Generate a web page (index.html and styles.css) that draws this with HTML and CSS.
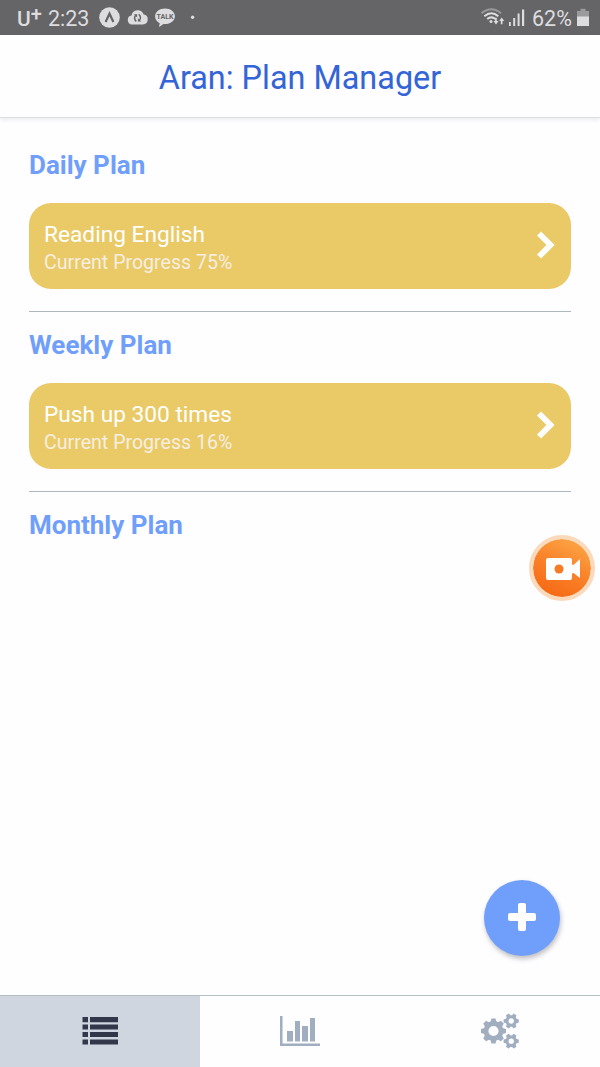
FILE: index.html
```html
<!DOCTYPE html>
<html lang="en">
<head>
<meta charset="utf-8">
<title>Aran: Plan Manager</title>
<link rel="stylesheet" href="styles.css">
</head>
<body>
<div class="app">
  <div class="status">
    <span class="carrier">U<span class="carrier-plus">+</span></span>
    <span class="clock">2:23</span>
    <svg class="status-icons" width="100" height="35" viewBox="98 0 100 35">
      <circle cx="109.500" cy="17.500" r="10.300" fill="#dddddf"/>
      <path d="M105.600 22 109.500 13.700 113.400 22" fill="none" stroke="#656466" stroke-width="2.200"/>
      <path d="M132 24.500a4.600 4.600 0 0 1-.5-9.100 6.300 6.300 0 0 1 12-1.200 5.200 5.200 0 0 1-.6 10.300z" fill="#dddddf"/>
      <path d="M136.300 21.300a4 4 0 0 1-.6-6.100M138.700 14.400a4 4 0 0 1 .6 6.100" fill="none" stroke="#656466" stroke-width="1.500"/>
      <path d="M133.800 14.300h3.300v3.300zM141.200 21.500h-3.300v-3.300z" fill="#656466"/>
      <path d="M165 8.500c5.600 0 9.900 3.400 9.900 7.800s-4.300 7.800-9.900 7.800h-1.500L159 27l.7-3.800c-2.800-1.400-4.600-3.900-4.600-6.900 0-4.400 4.300-7.800 9.900-7.800z" fill="#dddddf"/>
      <text class="talk" x="165" y="19" text-anchor="middle">TALK</text>
      <circle cx="192.600" cy="17.300" r="1.700" fill="#dddddf"/>
    </svg>
    <svg class="signal" width="44" height="35" viewBox="481 0 44 35">
      <g fill="none" stroke-width="2">
        <path d="M481.500 13.300q10-8 19.500 0" stroke="#99989a"/>
        <path d="M484.300 16.200q7.200-5.800 14 0M487.200 19q4.200-3.300 8.200 0" stroke="#dddddf"/>
      </g>
      <circle cx="491" cy="21.500" r="1.500" fill="#dddddf"/>
      <path d="M493.500 21h1.600v-3.200h1.700V21h1.700l-2.500 3.500zM499.300 21l2.400-3.500 2.500 3.500h-1.700v3.200h-1.700V21z" fill="#dddddf"/>
      <path d="M509 22h1.800v4H509zM513.200 18h2v8h-2zM517.600 13.500h2V26h-2zM522 9.500h2.200V26H522z" fill="#dddddf"/>
    </svg>
    <span class="battery-text">62%</span>
    <svg class="battery" width="12" height="35" viewBox="577 0 12 35">
      <path d="M577 11h3.500V8.800h5V11h3.500v6h-12z" fill="#9b9a9c"/>
      <path d="M577 16.500h12V26h-12z" fill="#dddddf"/>
    </svg>
  </div>
  <header class="header">Aran: Plan Manager</header>
  <main class="plans">
    <section class="plan">
      <h2 class="heading">Daily Plan</h2>
      <div class="card">
        <div class="card-body">
          <div class="card-title">Reading English</div>
          <div class="card-sub">Current Progress 75%</div>
        </div>
        <svg class="chevron" width="20" height="28" viewBox="0 0 20 28"><path d="M3 2.500 14.500 14 3 25.500" fill="none" stroke="#fff" stroke-width="5.800"/></svg>
      </div>
    </section>
    <section class="plan">
      <h2 class="heading">Weekly Plan</h2>
      <div class="card">
        <div class="card-body">
          <div class="card-title">Push up 300 times</div>
          <div class="card-sub">Current Progress 16%</div>
        </div>
        <svg class="chevron" width="20" height="28" viewBox="0 0 20 28"><path d="M3 2.500 14.500 14 3 25.500" fill="none" stroke="#fff" stroke-width="5.800"/></svg>
      </div>
    </section>
    <section class="plan last">
      <h2 class="heading">Monthly Plan</h2>
    </section>
  </main>
  <nav class="tabs">
    <div class="tab active">
      <svg width="38" height="30" viewBox="81 1015 38 30"><path fill="#32384a" d="M82.500 1016h5.500v5.200h-5.500zM90 1016h28v5.200H90zM82.500 1023.400h5.500v5.200h-5.500zM90 1023.400h28v5.200H90zM82.500 1030.900h5.500v5.200h-5.500zM90 1030.900h28v5.200H90zM82.500 1038.400h5.500v5.200h-5.500zM90 1038.400h28v5.200H90z"/></svg>
    </div>
    <div class="tab">
      <svg width="40" height="30" viewBox="280 1016 40 30"><path fill="#a0aec0" d="M280 1016h2.500v27.500H320v2.500h-40zM287 1031h6v10.500h-6zM295 1021h5v20.500h-5zM302 1026h6v15.500h-6zM310 1018h5v23.500h-5z"/></svg>
    </div>
    <div class="tab">
      <svg width="40" height="36" viewBox="480 1013 40 36">
        <defs>
          <path id="tooth" d="M-3.300-8-2-12.500H2L3.300-8z"/>
          <path id="small-tooth" d="M-2.400-4.500-1.600-7.600H1.600L2.400-4.500z"/>
          <g id="small-gear">
            <circle r="4.200" fill="none" stroke="#a0aec0" stroke-width="3"/>
            <use href="#small-tooth" transform="rotate(30)"/><use href="#small-tooth" transform="rotate(90)"/><use href="#small-tooth" transform="rotate(150)"/><use href="#small-tooth" transform="rotate(210)"/><use href="#small-tooth" transform="rotate(270)"/><use href="#small-tooth" transform="rotate(330)"/>
          </g>
        </defs>
        <g fill="#a0aec0" transform="translate(493.500 1031)">
          <circle r="7.500" fill="none" stroke="#a0aec0" stroke-width="4.800"/>
          <use href="#tooth"/><use href="#tooth" transform="rotate(45)"/><use href="#tooth" transform="rotate(90)"/><use href="#tooth" transform="rotate(135)"/><use href="#tooth" transform="rotate(180)"/><use href="#tooth" transform="rotate(225)"/><use href="#tooth" transform="rotate(270)"/><use href="#tooth" transform="rotate(315)"/>
        </g>
        <use href="#small-gear" fill="#a0aec0" transform="translate(511.200 1021)"/>
        <use href="#small-gear" fill="#a0aec0" transform="translate(511.200 1041.200)"/>
      </svg>
    </div>
  </nav>
  <div class="recorder">
    <svg width="34" height="24" viewBox="0 0 34 24"><path d="M2 1h22a2 2 0 0 1 2 2v4.500l1.500.5L34 2v19l-6.500-5-1.500.5V21a2 2 0 0 1-2 2H2a2 2 0 0 1-2-2V3a2 2 0 0 1 2-2z" fill="#fff"/><circle cx="13" cy="12" r="4.500" fill="#f77a25"/></svg>
  </div>
  <div class="add">
    <svg width="28" height="28" viewBox="0 0 28 28"><path d="M12 0h4a2 2 0 0 1 2 2v8h8a2 2 0 0 1 2 2v4a2 2 0 0 1-2 2h-8v8a2 2 0 0 1-2 2h-4a2 2 0 0 1-2-2v-8H2a2 2 0 0 1-2-2v-4a2 2 0 0 1 2-2h8V2a2 2 0 0 1 2-2z" fill="#fff"/></svg>
  </div>
</div>
</body>
</html>
```
FILE: styles.css
```css
* { box-sizing: border-box; }
body { margin: 0; background: #fefdff; font-family: Roboto, "Liberation Sans", sans-serif; }
svg { display: block; flex: none; }
.app { position: relative; display: flex; flex-direction: column; height: 1067px; overflow: hidden; }
.status { display: flex; align-items: center; height: 35px; background: #656466; color: #dddddf; padding: 0 11px 0 17px; flex: none; white-space: nowrap; }
.carrier { display: flex; width: 31px; font-size: 21px; line-height: 24px; font-weight: 500; padding-top: 2px; }
.carrier-plus { font-size: 20px; line-height: 14px; font-weight: 500; }
.clock { width: 50px; font-size: 21.5px; padding-top: 2px; }
.talk { font: 700 7px Roboto, sans-serif; fill: #656466; }
.signal { margin-left: auto; }
.battery-text { width: 45px; margin-left: 7px; font-size: 21.5px; padding-top: 2px; }
.header { flex: none; height: 83px; border-bottom: 1px solid #dcdfe2; box-shadow: 0 2px 4px rgba(0,0,0,.07); text-align: center; font-size: 32.4px; line-height: 86px; color: #3365d6; }
.plans { flex: 1; padding: 20px 29px 0; }
.plan { height: 180px; border-bottom: 1px solid #afb7bd; padding-top: 10px; }
.plan:first-child { height: 174px; padding-top: 4px; }
.plan.last { border: 0; }
.heading { margin: 0 0 15px; height: 46px; line-height: 46px; font-size: 26px; font-weight: 700; color: #709ffb; }
.card { display: flex; align-items: center; justify-content: space-between; height: 86px; border-radius: 22px; background: #e9ca66; padding: 0 15px; }
.card-title { font-size: 22.7px; line-height: 29px; color: #fff; }
.card-sub { font-size: 19.6px; line-height: 28px; color: #f7eee1; }
.card-body { padding-top: 4px; }
.chevron { margin-bottom: 2px; }
.tabs { display: flex; height: 72px; border-top: 1px solid #b4bfc5; flex: none; }
.tab { flex: 1; display: flex; align-items: center; justify-content: center; padding-bottom: 2px; }
.active { background: #d0d6df; }
.recorder { position: absolute; left: 529px; top: 535px; width: 66px; height: 66px; border-radius: 50%; border: 4px solid #fbd9bb; background: linear-gradient(25deg, #f5620f, #fa852b 55%, #fcae4e) padding-box; display: flex; align-items: center; justify-content: center; padding: 1px 0 0 2px; }
.add { position: absolute; left: 484px; top: 880px; width: 76px; height: 76px; border-radius: 50%; background: #709ffb; box-shadow: 1px 3px 5px rgba(0,0,0,.25); display: flex; align-items: center; justify-content: center; padding-bottom: 2px; }
```
